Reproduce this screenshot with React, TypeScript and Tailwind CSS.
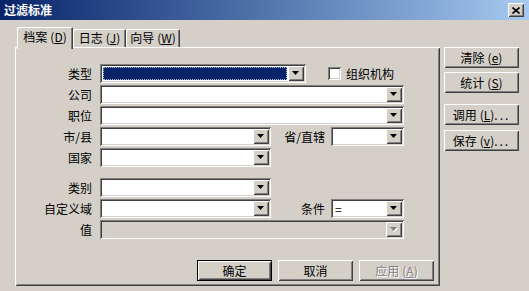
import React from "react";

const raised =
  "shadow-[inset_1px_1px_#ffffff,inset_-1px_-1px_#404040,inset_2px_2px_#d4d0c8,inset_-2px_-2px_#808080]";
const sunken =
  "shadow-[inset_1px_1px_#808080,inset_-1px_-1px_#ffffff,inset_2px_2px_#404040,inset_-2px_-2px_#d4d0c8]";
const defaultBtn =
  "shadow-[inset_1px_1px_#000000,inset_-1px_-1px_#000000,inset_2px_2px_#ffffff,inset_-2px_-2px_#404040,inset_3px_3px_#d4d0c8,inset_-3px_-3px_#808080]";

function Arrow({ disabled }: { disabled?: boolean }) {
  return (
    <svg width="8" height="5" viewBox="0 0 8 5" className="block">
      {disabled && <polygon points="1,1 8,1 4.5,5" fill="#ffffff" />}
      <polygon points="0,0 7,0 3.5,4" fill={disabled ? "#808080" : "#000000"} />
    </svg>
  );
}

function Combo({
  w,
  selected,
  disabled,
  text,
}: {
  w: string;
  selected?: boolean;
  disabled?: boolean;
  text?: string;
}) {
  return (
    <div
      className={`flex h-[19px] p-[2px] ${w} ${disabled ? "bg-[#d4d0c8]" : "bg-white"} ${sunken}`}
    >
      <div className="flex-1 flex items-center min-w-0">
        {selected ? (
          <div className="ml-[1px] mr-[1px] h-[13px] flex-1 bg-[#0a246a] border border-dotted border-[#b8c0d8]" />
        ) : (
          <span className="pl-[2px] text-[12px] leading-none">{text}</span>
        )}
      </div>
      <div
        className={`w-[16px] h-[15px] bg-[#d4d0c8] flex items-center justify-center ${raised}`}
      >
        <Arrow disabled={disabled} />
      </div>
    </div>
  );
}

function Label({ children, w = "w-[77px]" }: { children: React.ReactNode; w?: string }) {
  return <div className={`${w} text-right leading-none shrink-0`}>{children}</div>;
}

function Key({ k }: { k: string }) {
  return (
    <span className="ml-[3px]">
      (<u>{k}</u>)
    </span>
  );
}

function Btn({
  children,
  kind = "normal",
  w = "w-[75px]",
}: {
  children: React.ReactNode;
  kind?: "normal" | "default" | "disabled";
  w?: string;
}) {
  const shadow = kind === "default" ? defaultBtn : raised;
  return (
    <div
      className={`${w} h-[21px] flex items-center justify-center bg-[#d4d0c8] ${shadow} ${
        kind === "disabled" ? "text-[#808080] [text-shadow:1px_1px_0_#ffffff]" : "text-black"
      }`}
    >
      <span className="leading-none">{children}</span>
    </div>
  );
}

const tabShadow =
  "shadow-[inset_1px_1px_#ffffff,inset_-1px_0_#404040,inset_-2px_0_#808080]";

export default function App() {
  return (
    <div className="w-[529px] h-[291px] bg-[#d4d0c8] flex flex-col overflow-hidden font-['Noto_Sans_CJK_SC','Noto_Sans',sans-serif] text-[12px] leading-none text-black">
      {/* Title bar */}
      <div className="h-[20px] flex items-center justify-between pl-[4px] pr-[5px] bg-gradient-to-r from-[#0a246a] to-[#a6caf0]">
        <span className="text-white font-bold text-[12px] leading-none">过滤标准</span>
        <div className={`w-[16px] h-[14px] bg-[#d4d0c8] flex items-center justify-center ${raised}`}>
          <svg width="8" height="7" viewBox="0 0 8 7" className="block">
            <path d="M0.5 0.5 L7.5 6.5 M7.5 0.5 L0.5 6.5" stroke="#000" strokeWidth="1.6" />
          </svg>
        </div>
      </div>

      <div className="flex pl-[15px] pt-[7px]">
        {/* Left: tabs + panel */}
        <div className="w-[425px] flex flex-col">
          <div className="flex h-[20px] pl-[2px]">
            <div className={`relative z-10 w-[56px] h-[22px] bg-[#d4d0c8] rounded-t-[2px] ${tabShadow} flex items-center justify-center pb-[3px]`}>
              <span>
                档案<Key k="D" />
              </span>
            </div>
            <div className={`mt-[2px] w-[53px] h-[18px] bg-[#d4d0c8] rounded-t-[2px] ${tabShadow} flex items-center justify-center pb-[1px]`}>
              <span>
                日志<Key k="J" />
              </span>
            </div>
            <div className={`mt-[2px] w-[54px] h-[18px] bg-[#d4d0c8] rounded-t-[2px] ${tabShadow} flex items-center justify-center pb-[1px]`}>
              <span>
                向导<Key k="W" />
              </span>
            </div>
          </div>

          <div className={`h-[239px] bg-[#d4d0c8] ${raised} flex flex-col pt-[17px]`}>
            <div className="flex items-center h-[19px]">
              <Label>类型</Label>
              <div className="ml-[8px]">
                <Combo w="w-[206px]" selected />
              </div>
              <div className={`ml-[22px] w-[13px] h-[13px] bg-white ${sunken}`} />
              <span className="ml-[5px]">组织机构</span>
            </div>
            <div className="flex items-center h-[19px] mt-[2px]">
              <Label>公司</Label>
              <div className="ml-[8px]">
                <Combo w="w-[304px]" />
              </div>
            </div>
            <div className="flex items-center h-[19px] mt-[2px]">
              <Label>职位</Label>
              <div className="ml-[8px]">
                <Combo w="w-[304px]" />
              </div>
            </div>
            <div className="flex items-center h-[19px] mt-[2px]">
              <Label>市/县</Label>
              <div className="ml-[8px]">
                <Combo w="w-[171px]" />
              </div>
              <Label w="w-[54px]">省/直辖</Label>
              <div className="ml-[6px]">
                <Combo w="w-[73px]" />
              </div>
            </div>
            <div className="flex items-center h-[19px] mt-[2px]">
              <Label>国家</Label>
              <div className="ml-[8px]">
                <Combo w="w-[171px]" />
              </div>
            </div>

            <div className="flex items-center h-[19px] mt-[11px]">
              <Label>类别</Label>
              <div className="ml-[8px]">
                <Combo w="w-[171px]" />
              </div>
            </div>
            <div className="flex items-center h-[19px] mt-[2px]">
              <Label>自定义域</Label>
              <div className="ml-[8px]">
                <Combo w="w-[171px]" />
              </div>
              <Label w="w-[54px]">条件</Label>
              <div className="ml-[6px]">
                <Combo w="w-[73px]" text="=" />
              </div>
            </div>
            <div className="flex items-center h-[19px] mt-[2px]">
              <Label>值</Label>
              <div className="ml-[8px]">
                <Combo w="w-[304px]" disabled />
              </div>
            </div>

            <div className="flex mt-[21px] pl-[182px] gap-[6px]">
              <Btn kind="default">确定</Btn>
              <Btn>取消</Btn>
              <Btn kind="disabled">
                应用<Key k="A" />
              </Btn>
            </div>
          </div>
        </div>

        {/* Right buttons */}
        <div className="ml-[4px] pt-[20px] flex flex-col">
          <Btn>
            清除<Key k="e" />
          </Btn>
          <div className="mt-[4px]">
            <Btn>
              统计<Key k="S" />
            </Btn>
          </div>
          <div className="mt-[11px]">
            <Btn>
              调用<Key k="L" /><span className="tracking-[2px]">...</span>
            </Btn>
          </div>
          <div className="mt-[5px]">
            <Btn>
              保存<Key k="v" /><span className="tracking-[2px]">...</span>
            </Btn>
          </div>
        </div>
      </div>
    </div>
  );
}
